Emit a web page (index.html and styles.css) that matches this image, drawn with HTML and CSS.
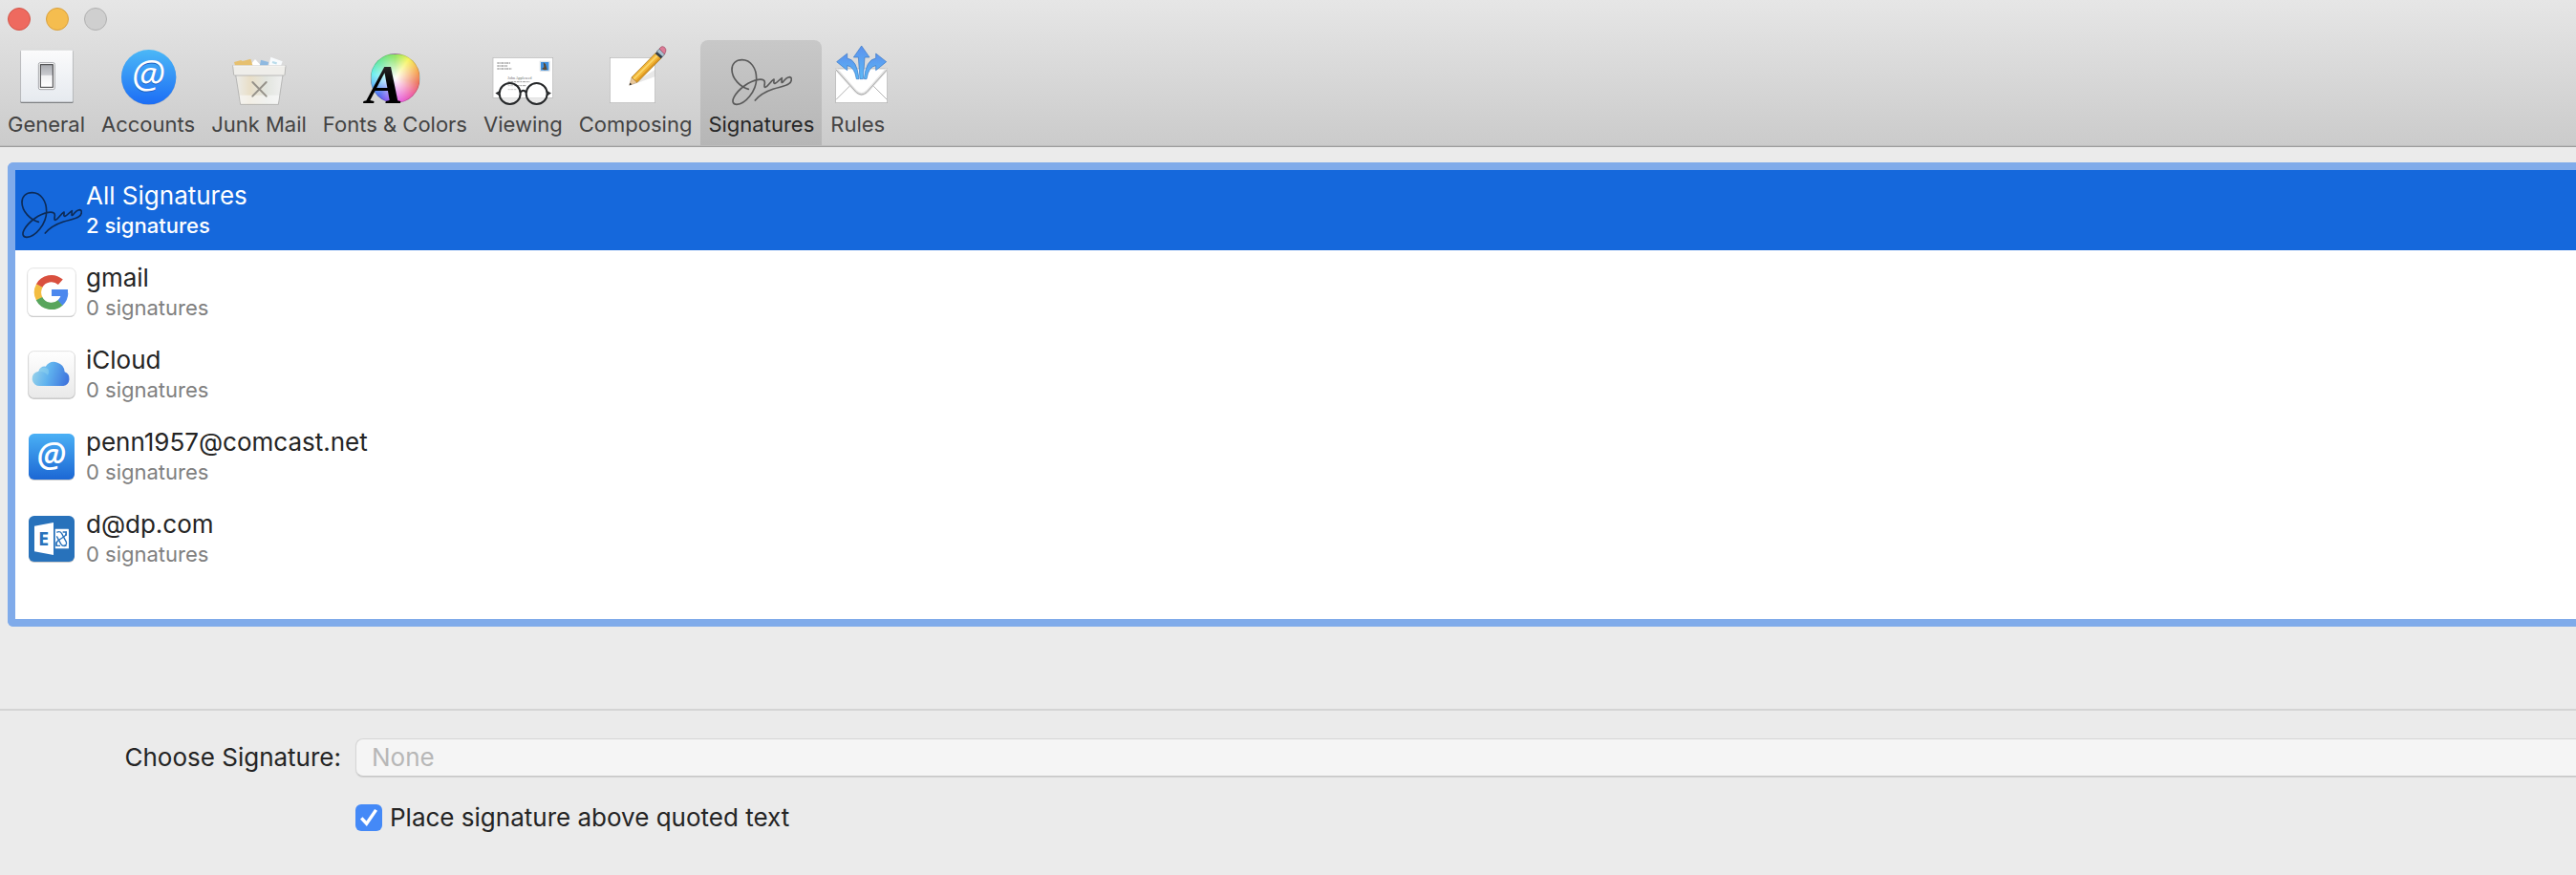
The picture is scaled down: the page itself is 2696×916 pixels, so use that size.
FILE: index.html
```html
<!DOCTYPE html>
<html lang="en">
<head>
    <meta charset="UTF-8">
    <meta name="viewport" content="width=device-width, initial-scale=1.0">
    <title>Signatures</title>
    <link rel="stylesheet" href="styles.css">
</head>
<body>
    <!-- Shared gradients and the signature scribble -->
    <svg class="defs" width="0" height="0" aria-hidden="true">
        <defs>
            <linearGradient id="plate" x1="0" y1="0" x2="0" y2="1">
                <stop offset="0" stop-color="#fbfbfc"/><stop offset="1" stop-color="#e6eaef"/>
            </linearGradient>
            <linearGradient id="toggle" x1="0" y1="0" x2="0" y2="1">
                <stop offset="0" stop-color="#a9abb0"/><stop offset="0.45" stop-color="#c9cacf"/>
                <stop offset="0.5" stop-color="#f1f1f3"/><stop offset="1" stop-color="#fff"/>
            </linearGradient>
            <linearGradient id="sky" x1="0" y1="0" x2="0" y2="1">
                <stop offset="0" stop-color="#4bb8f7"/><stop offset="1" stop-color="#1c6df5"/>
            </linearGradient>
            <linearGradient id="sky-dark" x1="0" y1="0" x2="0" y2="1">
                <stop offset="0" stop-color="#4ab0f5"/><stop offset="1" stop-color="#1c67d4"/>
            </linearGradient>
            <linearGradient id="arrow" x1="0" y1="0" x2="0" y2="1">
                <stop offset="0" stop-color="#5b92ee"/><stop offset="1" stop-color="#5cb9f6"/>
            </linearGradient>
            <linearGradient id="bin" x1="0" y1="0" x2="1" y2="0">
                <stop offset="0" stop-color="#ececea"/><stop offset="0.3" stop-color="#e9dfc8"/>
                <stop offset="0.65" stop-color="#e2e5df"/><stop offset="1" stop-color="#f0f0f0"/>
            </linearGradient>
            <linearGradient id="ink" x1="0" y1="0" x2="0" y2="1">
                <stop offset="0" stop-color="#444"/><stop offset="0.5" stop-color="#000"/>
            </linearGradient>
            <linearGradient id="cloud" x1="0" y1="0.4" x2="1" y2="0.6">
                <stop offset="0" stop-color="#9ad3ea"/><stop offset="0.45" stop-color="#5fb2ee"/><stop offset="1" stop-color="#3f74dd"/>
            </linearGradient>
            <linearGradient id="tile" x1="0" y1="0" x2="0" y2="1">
                <stop offset="0" stop-color="#fff"/><stop offset="1" stop-color="#e9e9e9"/>
            </linearGradient>
        </defs>
        <symbol id="scribble" viewBox="0 0 192 192">
            <path fill="none" stroke="currentColor" stroke-width="5" stroke-linecap="round" stroke-linejoin="round" d="M55 139 C30 133 3 106 3 78 C3 58 16 47 35 47 C62 47 80 73 80 106 C80 146 44 187 18 187 C5 187 3 176 10 163 C24 138 58 113 86 109 C101 107 107 111 106 120 C105 128 104 134 108 133 C117 130 124 114 135 108 C136 114 132 122 138 121 C146 119 151 109 160 104 C160 112 157 120 162 118 C168 110 176 101 185 101 C193 103 191 116 182 122 C172 130 152 132 132 139 C108 147 90 158 76 174"/>
        </symbol>
    </svg>

    <div class="window">
        <header class="titlebar">
            <div class="lights">
                <button class="light close" aria-label="Close"></button>
                <button class="light minimize" aria-label="Minimize"></button>
                <button class="light zoom" aria-label="Zoom" disabled></button>
            </div>
            <nav class="toolbar">
                <button class="tool">
                    <svg class="tool-icon" viewBox="0 0 192 192" aria-hidden="true">
                        <rect x="13" y="17" width="166" height="166" rx="4" fill="#7b7d80"/>
                        <rect x="14" y="16" width="164" height="163" rx="3" fill="url(#plate)" stroke="#c3c5c8" stroke-width="1"/>
                        <rect x="70" y="56" width="51" height="84" rx="5" fill="#fff" stroke="#a5a7aa" stroke-width="3"/>
                        <rect x="76" y="62" width="39" height="71" fill="url(#toggle)" stroke="#3a3a3c" stroke-width="3"/>
                    </svg>
                    <span class="tool-label">General</span>
                </button>
                <button class="tool">
                    <svg class="tool-icon" viewBox="0 0 192 192" aria-hidden="true">
                        <circle cx="98" cy="103" r="86" fill="#000" opacity="0.15"/>
                        <circle cx="98" cy="101" r="86" fill="url(#sky)"/>
                        <text class="at-sign at-shadow" x="97" y="139">@</text>
                        <text class="at-sign" x="97" y="136">@</text>
                    </svg>
                    <span class="tool-label">Accounts</span>
                </button>
                <button class="tool">
                    <svg class="tool-icon" viewBox="0 0 192 192" aria-hidden="true">
                        <path d="M18 54 L40 48 L44 51 L70 44 L77 65 L22 68 Z" fill="#e6c06f"/>
                        <path d="M74 57 L84 45 L100 62 L98 68 H78 Z" fill="#fff"/>
                        <path d="M102 47 L126 54 L124 68 H98 Z" fill="#8fb9e0"/>
                        <path d="M133 38 L170 52 L164 68 H126 Z" fill="#f8fbfd"/>
                        <path d="M138 54 L152 58" stroke="#b9dceb" stroke-width="7"/>
                        <path d="M23 94 L38 187 H157 L171 94 Z" fill="url(#bin)" stroke="#a2a2a0" stroke-width="2"/>
                        <path d="M35 158 L39 185 H155 L160 158 Z" fill="#fafafa" opacity="0.6"/>
                        <path d="M14 65 H180 L177 94 Q176 96 173 96 H21 Q18 96 17 94 Z" fill="#efeeea" stroke="#a2a2a0" stroke-width="2"/>
                        <path d="M15 66 H179" stroke="#fff" stroke-width="3"/>
                        <path d="M76 117 L119 161 M119 117 L76 161" stroke="#96928a" stroke-width="6" stroke-linecap="round"/>
                    </svg>
                    <span class="tool-label">Junk Mail</span>
                </button>
                <button class="tool">
                    <svg class="tool-icon" viewBox="0 0 192 192" aria-hidden="true">
                        <foreignObject x="20" y="27" width="156" height="156">
                            <div class="color-wheel"></div>
                        </foreignObject>
                        <text class="font-letter" x="64" y="183" fill="url(#ink)">A</text>
                    </svg>
                    <span class="tool-label">Fonts &amp; Colors</span>
                </button>
                <button class="tool">
                    <svg class="tool-icon" viewBox="0 0 192 192" aria-hidden="true">
                        <rect x="3" y="40" width="188" height="126" fill="#fff" stroke="#b5b5b5" stroke-width="2"/>
                        <path d="M16 57 H58 M16 66 H48 M16 75 H61" stroke="#777" stroke-width="3" stroke-dasharray="7 2 4 1"/>
                        <path d="M50 116 H118 M50 128 H108 M50 140 H78" stroke="#999" stroke-width="3" stroke-dasharray="6 2 9 2"/>
                        <text class="address" x="49" y="109">John Appleseed</text>
                        <rect x="150" y="51" width="31" height="32" fill="#e3eaf0" stroke="#c5cbd0" stroke-width="1"/>
                        <rect x="153" y="54" width="25" height="26" fill="#3d8fe0"/>
                        <path d="M161 55 L168 60 L173 78 L164 79 L156 75 L163 70 Z" fill="#5b4a35"/>
                        <g fill="none" stroke="#26282a" stroke-width="6">
                            <circle cx="56" cy="153" r="33" fill="#fff" fill-opacity="0.5"/>
                            <circle cx="140" cy="153" r="33" fill="#fff" fill-opacity="0.5"/>
                            <path d="M89 149 Q98 137 107 149"/>
                            <path d="M24 147 L15 152 L23 157 M172 147 L181 152 L173 157" stroke-width="5"/>
                        </g>
                    </svg>
                    <span class="tool-label">Viewing</span>
                </button>
                <button class="tool">
                    <svg class="tool-icon" viewBox="0 0 192 192" aria-hidden="true">
                        <rect x="16" y="40" width="142" height="142" fill="#fff" stroke="#b5b5b5" stroke-width="2"/>
                        <path d="M80 127 L157 78 V100 L112 116 Z" fill="#000" opacity="0.09"/>
                        <path d="M77 127 L84 102 L102 118 Z" fill="#e9c79a" stroke="#8f7146" stroke-width="1"/>
                        <path d="M77 127 L79 119 L85 124 Z" fill="#222"/>
                        <path d="M84 102 L160 25 L178 41 L102 118 Z" fill="#f2b535" stroke="#9a6a17" stroke-width="2"/>
                        <path d="M91 107 L167 31" stroke="#fbd568" stroke-width="6"/>
                        <path d="M99 115 L175 39" stroke="#d8921f" stroke-width="4"/>
                        <path d="M158 27 L164 21 L182 37 L176 43 Z" fill="#2f3c4a"/>
                        <path d="M163 21 L172 12 L189 28 L181 37 Z" fill="#a9c0cf" stroke="#49545e" stroke-width="2"/>
                        <path d="M171 12 L177 6 Q182 3 188 8 Q194 14 191 22 L187 29 Z" fill="#dc7b96" stroke="#99475f" stroke-width="2"/>
                    </svg>
                    <span class="tool-label">Composing</span>
                </button>
                <button class="tool active" aria-current="page">
                    <svg class="tool-icon" aria-hidden="true"><use href="#scribble"/></svg>
                    <span class="tool-label">Signatures</span>
                </button>
                <button class="tool">
                    <svg class="tool-icon" viewBox="0 0 192 192" aria-hidden="true">
                        <rect x="17" y="75" width="162" height="107" fill="#fff" stroke="#b0b0b0" stroke-width="2"/>
                        <path d="M18 172 L61 129 M178 172 L135 129" stroke="#b4b4b4" stroke-width="3"/>
                        <path d="M18 76 L80 146 Q98 164 116 146 L178 76" fill="none" stroke="#e4e4e4" stroke-width="9"/>
                        <path d="M18 78 L82 149 Q98 163 114 149 L178 78" fill="none" stroke="#a8a8a8" stroke-width="3"/>
                        <g fill="url(#arrow)" stroke="#3877c4" stroke-width="2" stroke-linejoin="round">
                            <path d="M98 3 L123 39 H108 L103 107 H93 L88 39 H73 Z"/>
                            <path d="M20 53 L53 27 V42 Q84 46 90 107 H82 Q76 68 53 65 V80 Z"/>
                            <path d="M176 53 L143 27 V42 Q112 46 106 107 H114 Q120 68 143 65 V80 Z"/>
                        </g>
                    </svg>
                    <span class="tool-label">Rules</span>
                </button>
            </nav>
        </header>

        <main class="content">
            <ul class="accounts">
                <li class="account selected">
                    <span class="account-icon"><svg class="scribble" aria-hidden="true"><use href="#scribble"/></svg></span>
                    <div class="account-text">
                        <div class="account-name">All Signatures</div>
                        <div class="account-count">2 signatures</div>
                    </div>
                </li>
                <li class="account">
                    <span class="account-icon">
                        <svg class="tile" viewBox="0 0 156 156" aria-hidden="true">
                            <rect x="2" y="4" width="152" height="152" rx="19" fill="#c9c9c9"/>
                            <rect x="2" y="2" width="152" height="151" rx="18" fill="#fff" stroke="#d6d6d6" stroke-width="2"/>
                            <g fill="none" stroke-width="22">
                                <path d="M106 46 A43 43 0 0 0 39 58" stroke="#d9503f"/>
                                <path d="M40 57 A43 43 0 0 0 40 99" stroke="#f3bd42"/>
                                <path d="M39 98 A43 43 0 0 0 106 110" stroke="#58a55c"/>
                                <path d="M105 111 A43 43 0 0 0 119 80" stroke="#4c88ee"/>
                            </g>
                            <rect x="78" y="69" width="51" height="21" fill="#4c88ee"/>
                        </svg>
                    </span>
                    <div class="account-text">
                        <div class="account-name">gmail</div>
                        <div class="account-count">0 signatures</div>
                    </div>
                </li>
                <li class="account">
                    <span class="account-icon">
                        <svg class="tile" viewBox="0 0 156 156" aria-hidden="true">
                            <rect x="4" y="6" width="148" height="149" rx="18" fill="#b9b9b9"/>
                            <rect x="5" y="5" width="146" height="147" rx="17" fill="url(#tile)" stroke="#d4d4d4" stroke-width="2"/>
                            <path d="M43 114 A23 23 0 0 1 37 68 A19 19 0 0 1 59 53 A33 33 0 0 1 119 70 A23 23 0 0 1 115 114 Z" fill="url(#cloud)"/>
                            <path d="M37 68 A19 19 0 0 1 67 61 Q72 70 66 80 Q54 67 37 68 Z" fill="#9bdcf0" opacity="0.4"/>
                        </svg>
                    </span>
                    <div class="account-text">
                        <div class="account-name">iCloud</div>
                        <div class="account-count">0 signatures</div>
                    </div>
                </li>
                <li class="account">
                    <span class="account-icon">
                        <svg class="tile" viewBox="0 0 156 156" aria-hidden="true">
                            <rect x="6" y="9" width="144" height="144" rx="17" fill="#000" opacity="0.2"/>
                            <rect x="6" y="6" width="144" height="144" rx="17" fill="url(#sky-dark)"/>
                            <text class="at-sign at-bold" x="77" y="110">@</text>
                        </svg>
                    </span>
                    <div class="account-text">
                        <div class="account-name">penn1957@comcast.net</div>
                        <div class="account-count">0 signatures</div>
                    </div>
                </li>
                <li class="account">
                    <span class="account-icon">
                        <svg class="tile" viewBox="0 0 156 156" aria-hidden="true">
                            <rect x="6" y="9" width="144" height="144" rx="17" fill="#000" opacity="0.2"/>
                            <rect x="6" y="6" width="144" height="144" rx="17" fill="#2872bb"/>
                            <rect x="88" y="47" width="44" height="62" rx="2" fill="#fff"/>
                            <g fill="none" stroke="#2872bb" stroke-width="4">
                                <path d="M94 58 Q104 52 110 62 L124 88 Q127 98 117 100"/>
                                <path d="M125 99 Q113 104 107 94 L94 70"/>
                                <path d="M123 56 Q126 66 116 72 L98 84 Q91 90 94 100"/>
                                <path d="M113 57 H124 V68 M105 100 H93 V88"/>
                            </g>
                            <path d="M84 27 V129 L89 130 V26 Z" fill="#2872bb"/>
                            <path d="M24 38 L84 27 V129 L24 118 Z" fill="#fff"/>
                            <text class="exchange-letter" x="53" y="99">E</text>
                        </svg>
                    </span>
                    <div class="account-text">
                        <div class="account-name">d@dp.com</div>
                        <div class="account-count">0 signatures</div>
                    </div>
                </li>
            </ul>
        </main>

        <form class="options">
            <label class="field-label" for="signature">Choose Signature:</label>
            <select class="field-select" id="signature" disabled>
                <option>None</option>
            </select>
            <div class="check-row">
                <input class="check" type="checkbox" id="above" checked>
                <label for="above">Place signature above quoted text</label>
            </div>
        </form>
    </div>
</body>
</html>
```

FILE: styles.css
```css
* {
    box-sizing: border-box;
}
body {
    margin: 0;
    background-color: #ebebeb;
    color: #242424;
    font-family: Inter, "Liberation Sans", sans-serif;
    font-size: 26px;
    line-height: 32px;
}
button {
    padding: 0;
    border: none;
    background: none;
    font: inherit;
    color: inherit;
}
.defs {
    position: absolute;
}
.window {
    display: flex;
    flex-direction: column;
    min-height: 100vh;
}

/* Title bar and toolbar */
.titlebar {
    background: linear-gradient(#e6e6e6, #cbcbcb);
    border-bottom: 1px solid #9d9d9d;
    box-shadow: inset 0 -1px #bcbcbc;
    padding-bottom: 1px;
}
.lights {
    display: flex;
    gap: 16px;
    padding: 8px 8px 10px;
}
.light {
    width: 24px;
    height: 24px;
    border-radius: 50%;
    border: 1px solid #d35549;
    background-color: #ee6a5f;
}
.minimize {
    border-color: #d9a03c;
    background-color: #f5bd4f;
}
.zoom {
    border-color: #b0b0b0;
    background-color: #cfcfcf;
}
.toolbar {
    display: flex;
    gap: 1px;
}
.tool {
    display: flex;
    flex-direction: column;
    align-items: center;
    gap: 5px;
    padding: 5px 8px 8px;
    border-radius: 8px 8px 0 0;
    color: #434343;
}
.tool.active {
    background: linear-gradient(#c8c8c8, #b6b6b6);
    color: #262626;
}
.tool-icon {
    width: 64px;
    height: 64px;
    overflow: visible;
}
.active .tool-icon {
    color: #5a5a5a;
}
.tool-label {
    align-self: flex-start;
    font-size: 22px;
    line-height: 28px;
    white-space: nowrap;
}
.at-sign {
    font-family: "Open Sans", sans-serif;
    font-style: italic;
    font-size: 122px;
    fill: #fff;
    text-anchor: middle;
}
.at-shadow {
    fill: #1e5dc0;
}
.at-bold {
    font-size: 106px;
    font-weight: 600;
}
.font-letter {
    font-family: "Liberation Serif", serif;
    font-size: 174px;
    font-weight: bold;
    font-style: italic;
    text-anchor: middle;
}
.address {
    font-family: "Liberation Serif", serif;
    font-size: 12px;
    fill: #666;
}
.exchange-letter {
    font-family: "Open Sans", sans-serif;
    font-size: 60px;
    font-weight: bold;
    fill: #2872bb;
    text-anchor: middle;
}
.color-wheel {
    width: 156px;
    height: 156px;
    border-radius: 50%;
    border: 2px solid rgba(0, 0, 0, 0.2);
    background:
        radial-gradient(circle, #fff 0%, rgba(255, 255, 255, 0) 70%),
        conic-gradient(#8ce25a, #f6f45a 35deg, #f5a050 75deg, #ec7358 100deg, #ee5fa6 135deg, #e65fe0 170deg, #8a5cf0 200deg, #4b6af0 225deg, #62c8fa 260deg, #66eef0 280deg, #66e8a0 315deg, #8ce25a);
}

/* Account list */
.content {
    padding: 16px 0 0 8px;
}
.accounts {
    list-style: none;
    margin: 0;
    padding: 0 0 42px;
    display: flex;
    flex-direction: column;
    gap: 2px;
    background-color: #fff;
    border: 8px solid #80abea;
    border-right: none;
    border-radius: 6px 0 0 6px;
}
.account {
    display: flex;
    align-items: center;
    gap: 4px;
    height: 84px;
    padding-left: 6px;
}
.account-icon {
    display: flex;
    justify-content: center;
    width: 64px;
}
.scribble {
    width: 64px;
    height: 64px;
    margin-bottom: 4px;
    color: #0d2b57;
}
.tile {
    width: 52px;
    height: 52px;
}
.account-name {
    line-height: 32px;
}
.account-count {
    font-size: 22px;
    line-height: 30px;
    color: #808080;
}
.selected {
    background-color: #1568dc;
    color: #fff;
}
.selected .account-count {
    color: #fff;
    font-weight: 500;
}

/* Signature options */
.options {
    display: grid;
    grid-template-columns: 357px 1fr;
    column-gap: 15px;
    row-gap: 27px;
    margin-top: 86px;
    padding-top: 29px;
    border-top: 2px solid #d4d4d4;
}
.field-label {
    text-align: right;
    line-height: 40px;
}
.field-select {
    appearance: none;
    height: 40px;
    padding: 0 16px;
    border: 1px solid #d6d6d6;
    border-right: none;
    border-bottom-color: #c6c6c6;
    border-radius: 8px 0 0 8px;
    background-color: #f5f5f5;
    box-shadow: 0 1px 1px rgba(0, 0, 0, 0.1);
    font: inherit;
    color: #b7b7b7;
    opacity: 1;
}
.check-row {
    grid-column: 2;
    display: flex;
    align-items: center;
    gap: 8px;
}
.check {
    appearance: none;
    display: grid;
    place-items: center;
    width: 28px;
    height: 28px;
    margin: 0;
    border-radius: 6px;
    background-color: #fff;
}
.check:checked {
    background-color: #4489f7;
}
.check:checked::before {
    content: "";
    width: 18px;
    height: 18px;
    background-color: #fff;
    clip-path: polygon(0 58%, 14% 46%, 36% 70%, 84% 0, 100% 10%, 38% 100%);
}
```
